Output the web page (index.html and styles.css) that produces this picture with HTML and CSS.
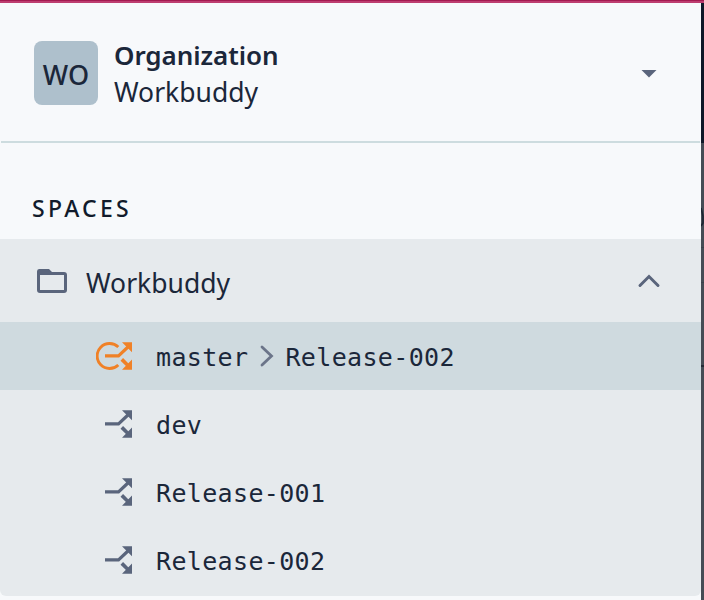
FILE: index.html
```
<!DOCTYPE html>
<html lang="en">
<head>
<meta charset="utf-8">
<title>Spaces</title>
<link rel="stylesheet" href="styles.css">
</head>
<body>
<svg class="defs" width="0" height="0" aria-hidden="true">
  <symbol id="branch" viewBox="0 0 38 30">
    <path d="M9 14.800H22.500L33 5" fill="none" stroke="currentColor" stroke-width="3.200"/>
    <path d="M26 1.200H36V11.200zM36 18.500V28.800H26z" fill="currentColor"/>
    <path d="M25.800 18.400L32 24.500" fill="none" stroke="currentColor" stroke-width="3.600"/>
  </symbol>
</svg>
<div class="topbar"></div>
<div class="layout">
  <main class="panel">
    <header class="org">
      <div class="avatar"><span>WO</span></div>
      <div class="org-text">
        <div class="org-label"><span>Organization</span></div>
        <div class="org-name"><span class="name">Workbuddy</span></div>
      </div>
      <svg class="caret" width="16" height="9" viewBox="0 0 16 9"><path d="M.5 1h15L8 8.500z" fill="currentColor"/></svg>
    </header>
    <h2 class="heading"><span>SPACES</span></h2>
    <section class="spaces">
      <div class="space">
        <svg class="folder" width="32" height="26" viewBox="0 0 32 26"><path d="M3 1h10l3 3h12q3 0 3 3v15q0 3-3 3H4q-3 0-3-3V3.500q0-2.500 2-2.500zM4 7v15h24V7z" fill="currentColor" fill-rule="evenodd"/></svg>
        <span class="name space-name">Workbuddy</span>
        <svg class="chevron-up" width="24" height="16" viewBox="0 0 24 16"><path d="M3 12.500L12 3.500L21 12.500" fill="none" stroke="currentColor" stroke-width="3" stroke-linecap="round"/></svg>
      </div>
      <div class="env active">
        <svg class="icon orange" width="38" height="30" viewBox="0 0 38 30"><path d="M22.300 6A12.500 12.500 0 1 0 22.300 24" fill="none" stroke="currentColor" stroke-width="2.900"/><use href="#branch" width="38" height="30"/></svg>
        <span class="mono">master</span>
        <svg class="chevron-right" width="14" height="22" viewBox="0 0 14 22"><path d="M2 2L11.500 11L2 20" fill="none" stroke="currentColor" stroke-width="2.800" stroke-linecap="round"/></svg>
        <span class="mono">Release-002</span>
      </div>
      <div class="env"><svg class="icon" width="38" height="30"><use href="#branch" width="38" height="30"/></svg><span class="mono">dev</span></div>
      <div class="env"><svg class="icon" width="38" height="30"><use href="#branch" width="38" height="30"/></svg><span class="mono">Release-001</span></div>
      <div class="env"><svg class="icon" width="38" height="30"><use href="#branch" width="38" height="30"/></svg><span class="mono">Release-002</span></div>
    </section>
  </main>
  <aside class="edge">
    <div class="edge-top"></div>
    <svg class="edge-body" width="3" height="457" viewBox="0 0 3 457">
      <path d="M0 65L2 73V80L0 83" fill="none" stroke="#1b2431" stroke-width="1.600"/>
      <path d="M0 104.500H3M0 139.500H3" stroke="#3a414b"/>
      <path d="M0 223H3" stroke="#232a35" stroke-width="2"/>
    </svg>
  </aside>
</div>
</body>
</html>
```
FILE: styles.css
```
* { box-sizing: border-box; }
body {
  margin: 0;
  width: 704px;
  height: 600px;
  overflow: hidden;
  background: #f7f9fb;
  color: #1b273a;
  font-family: "Noto Sans", "Open Sans", sans-serif;
}
.defs { display: none; }
svg { display: block; flex: none; color: #5a657c; }
.topbar { height: 3px; background: #bd3d70; border-top: 1px solid #a31a50; }
.layout { display: flex; height: 597px; }
.panel { width: 701px; background: #f7f9fb; }
.org {
  display: flex;
  align-items: center;
  height: 140px;
  margin: 0 1px;
  padding: 2px 43px 0 33px;
  border-bottom: 2px solid #cddcdf;
}
.avatar {
  display: flex;
  align-items: center;
  justify-content: center;
  width: 64px;
  height: 64px;
  padding-top: 3px;
  border-radius: 8px;
  background: #aec0cc;
  font-size: 27px;
  font-weight: 500;
}
.org-text { margin-left: 16px; padding-top: 2px; flex: 1; }
.org-label, .org-name { height: 37px; line-height: 37px; white-space: nowrap; }
.org-label { font-size: 26px; font-weight: 600; letter-spacing: -0.070px; }
.name { font-size: 26.500px; letter-spacing: 0; }
.heading {
  height: 96px;
  margin: 0;
  padding: 50px 0 0 32px;
  font-size: 23px;
  line-height: 30px;
  font-weight: 500;
  letter-spacing: 3.300px;
  color: #111b2b;
}
.spaces {
  height: 357px;
  border-radius: 0 0 6px 6px;
  background: #e6eaed;
}
.space {
  display: flex;
  align-items: center;
  height: 83px;
  padding: 0 40px 0 36px;
}
.folder { margin-top: 1px; }
.space-name { margin: 5px 0 0 18px; flex: 1; }
.chevron-up { margin-top: 1px; }
.env {
  display: flex;
  align-items: center;
  height: 68px;
  padding-left: 96px;
}
.active { background: #cfdadf; }
.orange { color: #f08127; }
.mono {
  margin-left: 22px;
  padding-top: 4px;
  font-family: "DejaVu Sans Mono", monospace;
  font-size: 25px;
  letter-spacing: 0.350px;
  line-height: 32px;
  white-space: nowrap;
}
.chevron-right { margin-left: 12px; color: #6b7489; }
.chevron-right + .mono { margin-left: 11px; }
.edge { width: 3px; }
.edge-top { height: 140px; background: #0e1828; }
.edge-body { background: #454c55; }
```
